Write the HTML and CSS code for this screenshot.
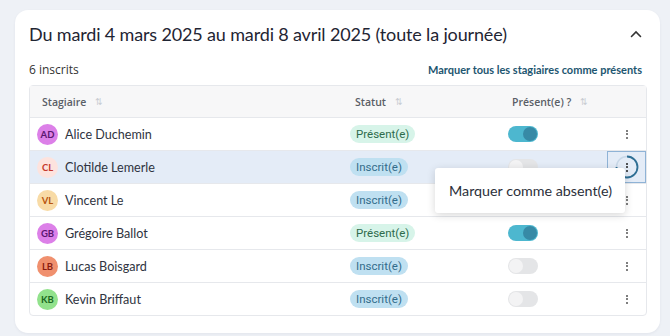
FILE: index.html
```html
<!DOCTYPE html>
<html lang="fr">
<head>
  <meta charset="UTF-8" />
  <title>Émargement</title>
  <link rel="stylesheet" href="styles.css">
</head>
<body>
  <div class="session-card">

    <!-- Session header -->
    <div class="session-header">
      <h2 class="session-title">Du mardi 4 mars 2025 au mardi 8 avril 2025 (toute la journée)</h2>
      <svg class="chevron" width="12" height="8" viewBox="0 0 12 8">
        <path d="M1.5 6.5 L6 2 L10.5 6.5" fill="none" stroke="#333" stroke-width="1.6" stroke-linecap="round"/>
      </svg>
    </div>

    <div class="toolbar">
      <span class="count">6 inscrits</span>
      <a class="mark-all">Marquer tous les stagiaires comme présents</a>
    </div>

    <!-- Attendance table -->
    <div class="table">
      <div class="row head">
        <div class="cell">Stagiaire <span class="sort">⇅</span></div>
        <div class="cell">Statut <span class="sort">⇅</span></div>
        <div class="cell">Présent(e) ? <span class="sort">⇅</span></div>
        <div class="cell"></div>
      </div>

      <div class="row">
        <div class="cell person"><span class="avatar av-purple">AD</span>Alice Duchemin</div>
        <div class="cell"><span class="badge present">Présent(e)</span></div>
        <div class="cell"><span class="toggle on"></span></div>
        <div class="cell actions"><span class="kebab"><i></i><i></i><i></i></span></div>
      </div>

      <div class="row selected">
        <div class="cell person"><span class="avatar av-rose">CL</span>Clotilde Lemerle</div>
        <div class="cell"><span class="badge inscrit">Inscrit(e)</span></div>
        <div class="cell"><span class="toggle"></span></div>
        <div class="cell actions focused">
          <span class="kebab">
            <svg class="ring" width="24" height="24" viewBox="0 0 24 24">
              <circle cx="12" cy="12" r="10.5" fill="none" stroke="#c9d8e8" stroke-width="1.5"/>
              <path d="M12 1.5 A10.5 10.5 0 1 1 1.5 12" fill="none" stroke="#2f6f94" stroke-width="1.8"/>
            </svg>
            <i></i><i></i><i></i>
          </span>
          <div class="menu">Marquer comme absent(e)</div>
        </div>
      </div>

      <div class="row">
        <div class="cell person"><span class="avatar av-sand">VL</span>Vincent Le</div>
        <div class="cell"><span class="badge inscrit">Inscrit(e)</span></div>
        <div class="cell"><span class="toggle"></span></div>
        <div class="cell actions"><span class="kebab"><i></i><i></i><i></i></span></div>
      </div>

      <div class="row">
        <div class="cell person"><span class="avatar av-purple">GB</span>Grégoire Ballot</div>
        <div class="cell"><span class="badge present">Présent(e)</span></div>
        <div class="cell"><span class="toggle on"></span></div>
        <div class="cell actions"><span class="kebab"><i></i><i></i><i></i></span></div>
      </div>

      <div class="row">
        <div class="cell person"><span class="avatar av-coral">LB</span>Lucas Boisgard</div>
        <div class="cell"><span class="badge inscrit">Inscrit(e)</span></div>
        <div class="cell"><span class="toggle"></span></div>
        <div class="cell actions"><span class="kebab"><i></i><i></i><i></i></span></div>
      </div>

      <div class="row">
        <div class="cell person"><span class="avatar av-green">KB</span>Kevin Briffaut</div>
        <div class="cell"><span class="badge inscrit">Inscrit(e)</span></div>
        <div class="cell"><span class="toggle"></span></div>
        <div class="cell actions"><span class="kebab"><i></i><i></i><i></i></span></div>
      </div>
    </div>

  </div>
</body>
</html>
```

FILE: styles.css
```css
/* — Base — */
* { box-sizing: border-box; margin: 0; padding: 0; }
body {
  font-family: Lato, "Noto Sans", sans-serif;
  background: #eef1f6;
  color: #2b2f3a;
  padding: 10px 10px 0 15px;
  height: 336px;
  overflow: hidden;
}

/* — Card — */
.session-card {
  background: #fff;
  border-radius: 13px;
  width: 645px;
  padding: 11px 14px 17px 14px;
  box-shadow: 0 1px 3px rgba(30,40,60,0.06);
}
.session-header {
  display: flex; justify-content: space-between; align-items: center;
  height: 26px;
}
.session-title {
  font-size: 18px; font-weight: 400; color: #1f2533;
  letter-spacing: -0.15px;
}
.chevron { margin-right: 4px; }

.toolbar {
  display: flex; justify-content: space-between; align-items: center;
  margin-top: 14px; margin-bottom: 7px;
}
.count {
  font-family: "Open Sans", sans-serif;
  font-size: 12px; color: #333;
}
.mark-all {
  font-size: 11px; font-weight: 700; color: #1d5670;
  margin-right: 4px;
}

/* — Table — */
.table {
  border: 1px solid #e6e8ec;
  border-radius: 4px;
  width: 618px;
}
.row {
  display: grid;
  grid-template-columns: 313px 157px 107px 1fr;
  height: 33px;
  border-top: 1px solid #e6e8ec;
  align-items: center;
}
.row.head {
  border-top: none; height: 31px;
  background: #f7f7f8;
}
.row.selected { background: #e4ecf7; }
.cell {
  display: flex; align-items: center; height: 100%;
}
.head .cell {
  font-family: "Open Sans", sans-serif;
  font-size: 10.5px; font-weight: 600; color: #5a5e66;
  padding-left: 12px;
}
.sort { color: #c8ccd2; font-size: 9px; margin-left: 9px; font-weight: 400; }

.person {
  padding-left: 7px;
  font-size: 12.6px; color: #2f3441;
}
.avatar {
  width: 21px; height: 21px; border-radius: 50%;
  display: inline-flex; align-items: center; justify-content: center;
  font-size: 9.5px; font-weight: 700;
  margin-right: 7px;
}
.av-purple { background: #dc80e8; color: #5b1670; }
.av-rose   { background: #fde3de; color: #c6392b; }
.av-sand   { background: #f8dba6; color: #b8560f; }
.av-coral  { background: #f0906e; color: #8c1d10; }
.av-green  { background: #92e28c; color: #1b6a1f; }

/* — Status badges — */
.badge {
  font-family: Roboto, sans-serif;
  font-size: 11.5px; border-radius: 10px;
  padding: 2px 6px; margin-left: 7px;
}
.badge.present { background: #d7f4e9; color: #2e6b4c; }
.badge.inscrit { background: #bfe0f1; color: #336c8b; }

/* — Toggle — */
.toggle {
  position: relative;
  width: 30px; height: 16px; border-radius: 8px;
  background: #e4e5e7; margin-left: 8px;
}
.toggle::after {
  content: ""; position: absolute; top: 1px; left: 1px;
  width: 14px; height: 14px; border-radius: 50%;
  background: #f3f3f4;
}
.toggle.on { background: #4db7cf; }
.toggle.on::after { left: 15px; background: #378aa6; }

/* — Row actions — */
.actions { justify-content: center; position: relative; }
.kebab {
  position: relative;
  display: flex; flex-direction: column; gap: 1.5px;
  align-items: center; justify-content: center;
  width: 24px; height: 24px;
}
.kebab i { width: 2px; height: 2px; background: #555; border-radius: 1px; }
.focused { border: 1px solid #8fb3d6; }
.ring { position: absolute; top: 0; left: 0; }
.focused .kebab i { background: #222; }

.menu {
  position: absolute; top: 16px; right: 20px;
  width: 190px; height: 45px;
  background: #fff; border-radius: 3px;
  box-shadow: 0 2px 8px rgba(0,0,0,0.16);
  display: flex; align-items: center; padding-left: 14px;
  font-size: 14.3px; color: #2b2f3a;
  white-space: nowrap;
  z-index: 2;
}
```
